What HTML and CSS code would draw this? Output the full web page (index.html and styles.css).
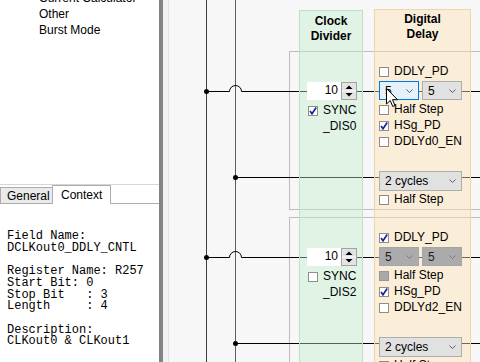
FILE: index.html
```html
<!DOCTYPE html>
<html lang="en">
<head>
    <meta charset="UTF-8">
    <title>Clock Outputs</title>
    <link rel="stylesheet" href="styles.css">
</head>
<body>
    <div class="side">
        <div class="tree">
            <ul>
                <li>Current Calculator</li>
                <li>Other</li>
                <li>Burst Mode</li>
            </ul>
        </div>
        <div class="tabs">
            <div class="tab tab-general">General</div>
            <div class="tab tab-context">Context</div>
            <div class="tab-fill"></div>
        </div>
<pre class="panel">Field Name:
DCLKout0_DDLY_CNTL

Register Name: R257
Start Bit: 0
Stop Bit   : 3
Length     : 4

Description:
CLKout0 &amp; CLKout1</pre>
    </div>

    <div class="split"></div>

    <div class="canvas">
        <!-- bus lines, wires and group frames -->
        <svg class="wires" width="312" height="362" viewBox="168 0 312 362">
            <g fill="none">
                <rect x="289.5" y="51.5" width="300" height="158" stroke="#bdbdbd"/>
                <rect x="289.5" y="217.5" width="300" height="300" stroke="#bdbdbd"/>
                <line x1="206.5" y1="0" x2="206.5" y2="362" stroke="#3f3f3f"/>
                <line x1="235.5" y1="0" x2="235.5" y2="362" stroke="#5e5e5e"/>
                <path d="M206.5 91.5H229.5A6 6 0 0 1 241.5 91.5H480" stroke="#000"/>
                <path d="M235.5 177.5H480" stroke="#000"/>
                <path d="M206.5 257.5H229.5A6 6 0 0 1 241.5 257.5H480" stroke="#000"/>
                <path d="M235.5 343.5H480" stroke="#000"/>
            </g>
            <g fill="#000">
                <circle cx="206.5" cy="91.5" r="2.5"/>
                <circle cx="235.5" cy="177.5" r="2.5"/>
                <circle cx="206.5" cy="257.5" r="2.5"/>
                <circle cx="235.5" cy="343.5" r="2.5"/>
            </g>
        </svg>

        <div class="stages">
            <div class="col col-clk">
                <div class="col-head">Clock<br>Divider</div>
                <div class="grp">
                    <div class="spin">
                        <span class="spin-val">10</span>
                        <svg class="spin-btns" width="16" height="18" viewBox="0 0 16 18">
                            <rect x="0.5" y="0.5" width="15" height="17" fill="#e3e3e3" stroke="#a2a2a2"/>
                            <line x1="1" y1="9" x2="15" y2="9" stroke="#fff"/>
                            <path d="M4.5 7L8 3.5L11.5 7Z" fill="#000"/>
                            <path d="M4.5 11L8 14.5L11.5 11Z" fill="#000"/>
                        </svg>
                    </div>
                    <div class="row row-sync">
                        <span class="cb on"><svg width="8" height="8" viewBox="0 0 8 8"><polyline points="1,4 3,6.8 7.2,0.6"/></svg></span>
                        <span>SYNC<br>_DIS0</span>
                    </div>
                </div>
                <div class="grp">
                    <div class="spin">
                        <span class="spin-val">10</span>
                        <svg class="spin-btns" width="16" height="18" viewBox="0 0 16 18">
                            <rect x="0.5" y="0.5" width="15" height="17" fill="#e3e3e3" stroke="#a2a2a2"/>
                            <line x1="1" y1="9" x2="15" y2="9" stroke="#fff"/>
                            <path d="M4.5 7L8 3.5L11.5 7Z" fill="#000"/>
                            <path d="M4.5 11L8 14.5L11.5 11Z" fill="#000"/>
                        </svg>
                    </div>
                    <div class="row row-sync">
                        <span class="cb"></span>
                        <span>SYNC<br>_DIS2</span>
                    </div>
                </div>
            </div>

            <div class="col col-dly">
                <div class="col-head">Digital<br>Delay</div>
                <div class="grp">
                    <div class="row"><span class="cb"></span>DDLY_PD</div>
                    <div class="sels">
                        <div class="sel hover">5<svg width="7" height="4" viewBox="0 0 7 4"><polyline points="0.5,0.5 3.5,3.5 6.5,0.5"/></svg></div>
                        <div class="sel">5<svg width="7" height="4" viewBox="0 0 7 4"><polyline points="0.5,0.5 3.5,3.5 6.5,0.5"/></svg></div>
                    </div>
                    <div class="row row-first"><span class="cb"></span>Half Step</div>
                    <div class="row"><span class="cb on"><svg width="8" height="8" viewBox="0 0 8 8"><polyline points="1,4 3,6.8 7.2,0.6"/></svg></span>HSg_PD</div>
                    <div class="row"><span class="cb"></span>DDLYd0_EN</div>
                    <div class="sel sel-wide">2 cycles<svg width="7" height="4" viewBox="0 0 7 4"><polyline points="0.5,0.5 3.5,3.5 6.5,0.5"/></svg></div>
                    <div class="row"><span class="cb"></span>Half Step</div>
                </div>
                <div class="grp">
                    <div class="row"><span class="cb on"><svg width="8" height="8" viewBox="0 0 8 8"><polyline points="1,4 3,6.8 7.2,0.6"/></svg></span>DDLY_PD</div>
                    <div class="sels">
                        <div class="sel off">5<svg width="7" height="4" viewBox="0 0 7 4"><polyline points="0.5,0.5 3.5,3.5 6.5,0.5"/></svg></div>
                        <div class="sel off">5<svg width="7" height="4" viewBox="0 0 7 4"><polyline points="0.5,0.5 3.5,3.5 6.5,0.5"/></svg></div>
                    </div>
                    <div class="row row-first"><span class="cb off"></span>Half Step</div>
                    <div class="row"><span class="cb on"><svg width="8" height="8" viewBox="0 0 8 8"><polyline points="1,4 3,6.8 7.2,0.6"/></svg></span>HSg_PD</div>
                    <div class="row"><span class="cb"></span>DDLYd2_EN</div>
                    <div class="sel sel-wide">2 cycles<svg width="7" height="4" viewBox="0 0 7 4"><polyline points="0.5,0.5 3.5,3.5 6.5,0.5"/></svg></div>
                    <div class="row"><span class="cb"></span>Half Step</div>
                </div>
            </div>
        </div>

        <!-- mouse pointer over the first delay box -->
        <svg class="pointer" width="13" height="20" viewBox="0 0 13 20">
            <path d="M0.5 0.5V16L4.2 12.5L6.8 18.5L9 17.5L6.5 11.7H11.5Z" fill="#fff" stroke="#000"/>
        </svg>
    </div>
</body>
</html>
```

FILE: styles.css
```css
* {
    box-sizing: border-box;
}

html, body {
    margin: 0;
}

body {
    width: 480px;
    height: 362px;
    overflow: hidden;
    display: flex;
    background: #fff;
    color: #000;
    font-family: "Liberation Sans", Arial, sans-serif;
    font-size: 12px;
}

/* Panel izquierdo */
.side {
    width: 159px;
    flex: none;
    display: flex;
    flex-direction: column;
    background: #fff;
}

.tree {
    height: 185px;
    flex: none;
    overflow: hidden;
    border-bottom: 1px solid #d6d6d6;
}

.tree ul {
    list-style: none;
    margin: -10px 0 0;
    padding: 0 0 0 39px;
}

.tree li {
    line-height: 16px;
    white-space: nowrap;
}

.tabs {
    display: flex;
    align-items: flex-end;
    height: 19px;
    flex: none;
}

.tab {
    border: 1px solid #adadad;
    white-space: nowrap;
}

.tab-general {
    width: 53px;
    height: 17px;
    padding-left: 6px;
    line-height: 16px;
    background: #eaeaea;
}

.tab-context {
    width: 59px;
    height: 19px;
    margin-left: -1px;
    padding-left: 8px;
    line-height: 18px;
    border-bottom: none;
    background: #fff;
}

.tab-fill {
    flex: 1;
    border-bottom: 1px solid #adadad;
}

.panel {
    flex: 1;
    margin: 0;
    padding: 27px 0 0 7px;
    font-family: "Liberation Mono", monospace;
    font-size: 12px;
    line-height: 11.7px;
    white-space: pre;
}

.split {
    width: 4px;
    flex: none;
    background: #838383;
}

/* Lienzo del diagrama */
.canvas {
    flex: 1;
    position: relative;
    overflow: hidden;
    background: #f7f7f7;
    border-left: 5px solid #f2f2f2;
    box-shadow: inset 1px 0 #e2e2e2;
}

.wires {
    position: absolute;
    left: 0;
    top: 0;
}

.stages {
    position: relative;
    display: flex;
    align-items: flex-start;
    gap: 11px;
    padding-left: 131px;
}

.col {
    height: 420px;
    border: 1px solid;
}

.col-clk {
    width: 64px;
    margin-top: 10px;
    background: rgba(196, 238, 206, 0.42);
    border-color: #b9e2c3;
}

.col-dly {
    width: 97px;
    margin-top: 9px;
    background: rgba(255, 226, 180, 0.45);
    border-color: #ecd6b0;
}

.col-head {
    font-weight: bold;
    text-align: center;
    line-height: 15px;
}

.col-clk .col-head {
    height: 40px;
    padding-top: 3px;
}

.col-dly .col-head {
    height: 41px;
    padding-top: 2px;
}

.grp {
    height: 166px;
}

.col-clk .grp {
    padding-top: 31px;
}

.col-dly .grp {
    padding-top: 12px;
}

/* Spin box */
.spin {
    display: flex;
    height: 18px;
    margin-left: 7px;
}

.spin-val {
    width: 34px;
    height: 18px;
    padding-right: 3px;
    background: #fff;
    text-align: right;
    line-height: 16px;
}

.spin-btns {
    display: block;
}

/* Checkboxes */
.row {
    display: flex;
    align-items: flex-start;
    gap: 5px;
    height: 16px;
    padding-left: 4px;
    line-height: 16px;
    white-space: nowrap;
}

.row-first {
    margin-top: 1px;
}

.row-sync {
    height: 32px;
    margin-top: 2px;
    padding-left: 8px;
}

.cb {
    width: 10px;
    height: 10px;
    margin-top: 4px;
    flex: none;
    border: 1px solid #8e8e8e;
    background: #fff;
}

.cb svg {
    display: block;
}

.cb polyline {
    fill: none;
    stroke: #1d2399;
    stroke-width: 1.7;
}

.cb.off {
    background: #a9a9a9;
    border-color: #999;
}

/* Desplegables */
.sels {
    display: flex;
    gap: 3px;
    margin: 2px 0 0 4px;
}

.sel {
    display: flex;
    align-items: center;
    justify-content: space-between;
    width: 40px;
    height: 19px;
    padding: 0 5px;
    border: 1px solid #adadad;
    background: #e1e1e1;
    line-height: 16px;
    white-space: nowrap;
}

.sel polyline {
    fill: none;
    stroke: #5c5c5c;
}

.sel.hover {
    background: #e5f1fb;
    border-color: #0078d7;
}

.sel.off {
    background: #ababab;
    border-color: #a5a5a5;
    color: #1c1c1c;
}

.sel.off polyline {
    stroke: #7a7a7a;
}

.sel-wide {
    width: 83px;
    height: 20px;
    margin: 22px 0 0 4px;
}

.pointer {
    position: absolute;
    left: 218px;
    top: 88px;
}
```
